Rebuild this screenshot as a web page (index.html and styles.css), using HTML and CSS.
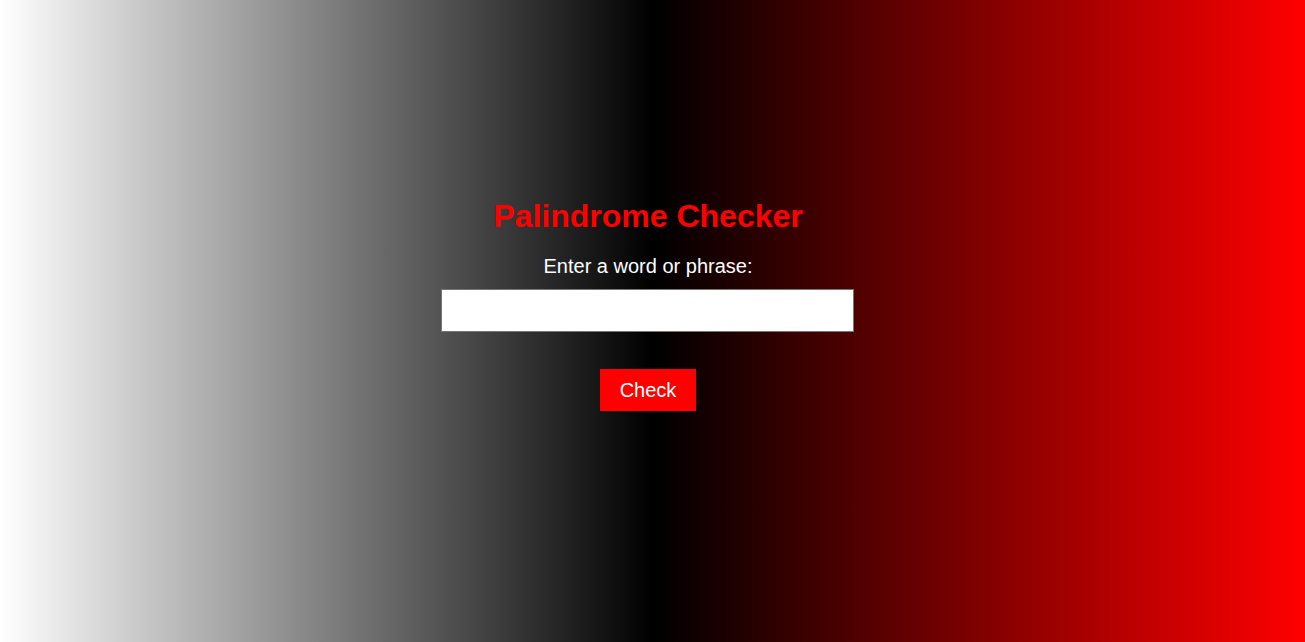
FILE: index.html
```html
<!DOCTYPE html>
<html lang="en">
<head>
<meta charset="UTF-8">
<title>Palindrome Checker</title>
<link rel="stylesheet" href="styles.css">
</head>
<body>
<main class="checker">
  <h1 class="title">Palindrome Checker</h1>
  <label class="prompt" for="word">Enter a word or phrase:</label>
  <input class="word-input" id="word" type="text">
  <button class="check-btn" type="button">Check</button>
</main>
</body>
</html>
```
FILE: styles.css
```css
html, body {
  margin: 0;
  height: 100%;
}
body {
  background: linear-gradient(to right, #ffffff, #000000, #ff0000);
  font-family: "Liberation Sans", Arial, sans-serif;
  overflow: hidden;
}
.checker {
  width: calc(100% - 9px);
  padding-top: 198px;
  display: flex;
  flex-direction: column;
  align-items: center;
}
.title {
  margin: 0 0 21px;
  font-size: 32px;
  font-weight: bold;
  color: #ff0000;
  line-height: 36px;
}
.prompt {
  display: block;
  color: #ffffff;
  font-size: 20px;
  line-height: 23px;
  margin-bottom: 11px;
}
.word-input {
  box-sizing: border-box;
  width: 413px;
  height: 43px;
  padding: 10px;
  font-size: 16px;
  border: 1px solid #767676;
  background: #ffffff;
  margin: 0 2px 0 0;
}
.check-btn {
  margin-top: 37px;
  box-sizing: border-box;
  width: 96px;
  height: 42px;
  padding: 0;
  border: none;
  background: #ff0000;
  color: #ffffff;
  font-family: "Liberation Sans", Arial, sans-serif;
  font-size: 20px;
  cursor: pointer;
}
```
